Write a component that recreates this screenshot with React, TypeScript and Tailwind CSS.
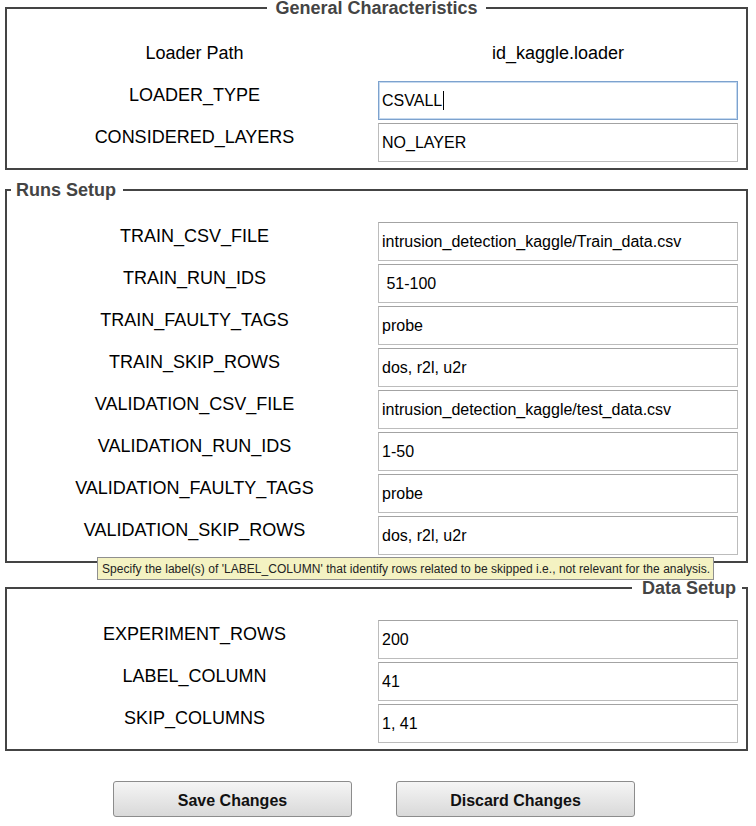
import React from "react";

type Field = { label: string; value: string; focused?: boolean };

const general: Field[] = [
  { label: "LOADER_TYPE", value: "CSVALL", focused: true },
  { label: "CONSIDERED_LAYERS", value: "NO_LAYER" },
];

const runs: Field[] = [
  { label: "TRAIN_CSV_FILE", value: "intrusion_detection_kaggle/Train_data.csv" },
  { label: "TRAIN_RUN_IDS", value: " 51-100" },
  { label: "TRAIN_FAULTY_TAGS", value: "probe" },
  { label: "TRAIN_SKIP_ROWS", value: "dos, r2l, u2r" },
  { label: "VALIDATION_CSV_FILE", value: "intrusion_detection_kaggle/test_data.csv" },
  { label: "VALIDATION_RUN_IDS", value: "1-50" },
  { label: "VALIDATION_FAULTY_TAGS", value: "probe" },
  { label: "VALIDATION_SKIP_ROWS", value: "dos, r2l, u2r" },
];

const data: Field[] = [
  { label: "EXPERIMENT_ROWS", value: "200" },
  { label: "LABEL_COLUMN", value: "41" },
  { label: "SKIP_COLUMNS", value: "1, 41" },
];

function Label({ children }: { children: React.ReactNode }) {
  return (
    <div className="h-[39px] pt-1 pl-1 text-center text-[18px] leading-[21px] text-black">
      {children}
    </div>
  );
}

function Input({ field }: { field: Field }) {
  if (field.focused) {
    return (
      <div className="flex h-[39px] items-center border border-[#7da2ce] pl-[3px] text-[16px] text-black shadow-[inset_0_0_0_1px_#c5d9ef]">
        <span className="whitespace-pre">{field.value}</span>
        <span className="ml-px h-[19px] w-px bg-black" />
      </div>
    );
  }
  return (
    <input
      readOnly
      defaultValue={field.value}
      className="h-[39px] w-full border border-[#bcbcbc] border-t-[#a3a3a3] bg-white pl-[3px] text-[16px] text-black outline-none"
    />
  );
}

function Rows({ fields }: { fields: Field[] }) {
  return (
    <>
      {fields.map((f) => (
        <React.Fragment key={f.label}>
          <Label>{f.label}</Label>
          <Input field={f} />
        </React.Fragment>
      ))}
    </>
  );
}

export default function App() {
  return (
    <div className="relative h-[826px] w-[756px] bg-white font-['Liberation_Sans',Arial,sans-serif]">
      <fieldset className="ml-[5px] w-[743px] border-2 border-[#444] pt-[23px] pb-[6px]">
        <legend className="mx-auto px-2 text-[18px] font-bold leading-4 text-[#444]">
          General Characteristics
        </legend>
        <div className="grid grid-cols-[371px_360px] gap-y-[3px]">
          <Label>Loader Path</Label>
          <div className="h-[39px] pt-1 text-center text-[18px] leading-[21px] text-black">
            id_kaggle.loader
          </div>
          <Rows fields={general} />
        </div>
      </fieldset>

      <fieldset className="mt-3 ml-[5px] w-[743px] border-2 border-[#444] pt-6 pb-[6px]">
        <legend className="ml-1 pl-[5px] pr-[7px] text-[18px] font-bold leading-4 text-[#444]">
          Runs Setup
        </legend>
        <div className="grid grid-cols-[371px_360px] gap-y-[3px]">
          <Rows fields={runs} />
        </div>
      </fieldset>

      <fieldset className="mt-[17px] ml-[5px] w-[743px] border-2 border-[#444] pt-6 pb-[6px]">
        <legend className="ml-auto mr-1 pl-[10px] pr-[6px] text-[18px] font-bold leading-4 text-[#444]">
          Data Setup
        </legend>
        <div className="grid grid-cols-[371px_360px] gap-y-[3px]">
          <Rows fields={data} />
        </div>
      </fieldset>

      <div className="mt-[30px] flex justify-center gap-11 pr-2">
        <button className="h-[36px] w-[239px] rounded-[3px] border border-[#8c8c8c] bg-gradient-to-b from-[#f5f5f5] to-[#d9d9d9] pt-[3px] text-[16px] font-bold text-[#111]">
          Save Changes
        </button>
        <button className="h-[36px] w-[239px] rounded-[3px] border border-[#8c8c8c] bg-gradient-to-b from-[#f5f5f5] to-[#d9d9d9] pt-[3px] text-[16px] font-bold text-[#111]">
          Discard Changes
        </button>
      </div>

      <div className="absolute left-[97px] top-[557px] flex h-[23px] w-[617px] items-center border border-[#8f8f8f] bg-[#f4f2c2] pl-1 text-[12px] tracking-[0.04px] text-[#222]">
        Specify the label(s) of 'LABEL_COLUMN' that identify rows related to be skipped i.e., not relevant for the analysis.
      </div>
    </div>
  );
}
